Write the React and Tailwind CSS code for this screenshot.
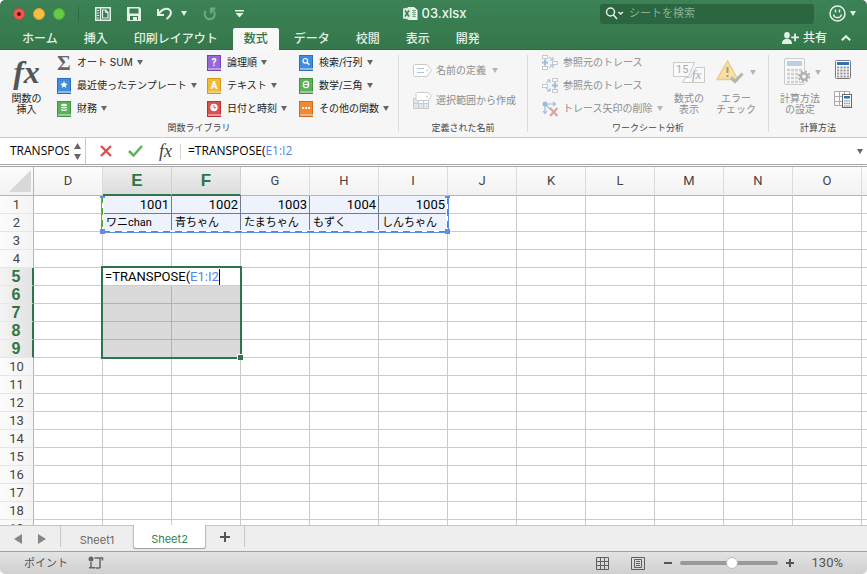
import { useState } from "react";
import clsx from "clsx";

const UI = "font-['Inter','Noto_Sans_CJK_JP',sans-serif]";
const CELL = "font-['Roboto','Noto_Sans_CJK_JP',sans-serif]";
const CODE = "font-['Open_Sans','Noto_Sans_CJK_JP',sans-serif]";

const TABS = ["ホーム", "挿入", "印刷レイアウト", "数式", "データ", "校閲", "表示", "開発"];
const COLUMNS = ["D", "E", "F", "G", "H", "I", "J", "K", "L", "M", "N", "O"];
const ROWS = Array.from({ length: 19 }, (_, i) => i + 1);

const DATA = {
    1: { E: "1001", F: "1002", G: "1003", H: "1004", I: "1005" },
    2: { E: "ワニchan", F: "青ちゃん", G: "たまちゃん", H: "もずく", I: "しんちゃん" },
};

const COL_W = 69;
const ROW_H = 18;
const HEAD_W = 34;
const HEAD_H = 29;

// box of a cell range in grid coordinates, starting on the gridline before it
const rangeBox = (col, row, cols, rows) => ({
    left: HEAD_W + COL_W * col - 1,
    top: HEAD_H + ROW_H * row - 1,
    width: COL_W * cols,
    height: ROW_H * rows,
});

const Caret = ({ className = "text-[#666]" }) => (
    <svg width="6" height="5" viewBox="0 0 6 5" className={clsx("shrink-0", className)} aria-hidden="true">
        <path d="M0 0h6L3 5z" fill="currentColor" />
    </svg>
);

const TitleBar = () => (
    <div className="flex h-[27px] items-center">
        <div className="flex flex-1 items-center pl-[13px]">
            <div className="flex gap-2">
                <button aria-label="閉じる" className="flex size-3 items-center justify-center rounded-full border border-[#c9473f] bg-[#f25a52]">
                    <span className="size-1 rounded-full bg-[#5a0d08]" />
                </button>
                <button aria-label="しまう" className="size-3 rounded-full border border-[#d9a032] bg-[#f8bc3f]" />
                <button aria-label="拡大" className="size-3 rounded-full border border-[#4fae35] bg-[#63cb45]" />
            </div>
            <span className="ml-[13px] h-4 w-px bg-[#2f6d45]" />
            <button aria-label="ギャラリー" className="ml-4">
                <svg width="16" height="14" viewBox="0 0 16 14" fill="none" stroke="#e4f1e8">
                    <path d="M.75.75h14.5v12.500H.75z" strokeWidth="1.500" />
                    <path d="M5.500 1v12" strokeWidth="1.200" />
                    <path d="M2 3.500h2M2 6h2M2 8.500h2M2 11h2" />
                    <path d="M7.500 3h3.200l2.300 2.300V11H7.500z" strokeWidth="1.200" />
                    <path d="M10.500 3v2.500H13" />
                </svg>
            </button>
            <button aria-label="保存" className="ml-4">
                <svg width="14" height="14" viewBox="0 0 14 14">
                    <path d="M0 0h12.500L14 1.500V14H0z" fill="#e4f1e8" />
                    <path d="M2.500 1.500h9v5h-9zM3 9h8v4H3z" fill="#397f52" />
                    <path d="M6 10h4v3H6z" fill="#e4f1e8" />
                </svg>
            </button>
            <button aria-label="元に戻す" className="ml-4 flex items-center gap-2">
                <svg width="16" height="13" viewBox="0 0 16 13" fill="none" stroke="#e4f1e8" strokeWidth="2">
                    <path d="M1.500 7.500C5 1 11 .5 13.200 3.500c2 3 .2 5.500-3.700 8.500" />
                    <path d="M1 2v6h6" />
                </svg>
                <Caret className="text-[#e4f1e8]" />
            </button>
            <button aria-label="やり直す" className="ml-4" disabled>
                <svg width="13" height="14" viewBox="0 0 13 14" fill="none" stroke="#6fa783" strokeWidth="2">
                    <path d="M2.800 4a5 5 0 1 0 5.700-1.500" />
                    <path d="M12.500 1.500H8V6.500" />
                </svg>
            </button>
            <button aria-label="ツールバーのカスタマイズ" className="ml-[19px]">
                <svg width="9" height="8" viewBox="0 0 9 8" fill="#e4f1e8">
                    <path d="M0 0h9v1.500H0zM.5 3h8l-4 4.500z" />
                </svg>
            </button>
        </div>
        <div className="flex items-center gap-1 text-[13px] font-medium text-[#eef6f0]">
            <svg width="15" height="15" viewBox="0 0 15 15">
                <path d="M5 1h6l3.500 3v10H5z" fill="#f3f8f4" />
                <path d="M9 4.500h4M9 6.500h4M9 8.500h4M9 10.500h4M11 3.500v8" stroke="#7fae8f" />
                <path d="M0 2.500 8 1v13l-8-1.500z" fill="#d8e8dd" />
                <path d="m2 4.500 4 6M6 4.500l-4 6" stroke="#397f52" strokeWidth="1.500" />
            </svg>
            <h1>03.xlsx</h1>
        </div>
        <div className="flex flex-1 items-center justify-end pr-[11px]">
            <label className="flex h-5 w-[214px] items-center rounded-[3px] bg-[#2b6641] pl-[5px]">
                <svg width="20" height="13" viewBox="0 0 20 13" fill="none" stroke="#e4f1e8" strokeWidth="1.500" className="shrink-0">
                    <circle cx="5.500" cy="5" r="4" />
                    <path d="m8.500 8 3.500 4M13.500 5l2.200 2 2.200-2" />
                </svg>
                <input
                    type="search"
                    aria-label="シートを検索"
                    placeholder="シートを検索"
                    className="ml-1 w-full min-w-0 bg-transparent text-[11px] outline-none placeholder:text-[#86b395]"
                />
            </label>
            <button aria-label="フィードバック" className="ml-[15px] flex items-center gap-1">
                <svg width="17" height="17" viewBox="0 0 17 17" fill="none" stroke="#e4f1e8" strokeWidth="1.500">
                    <circle cx="8.500" cy="8.500" r="7.500" />
                    <path d="M4.500 9.500c.7 4.200 7.300 4.200 8 0M6.500 4.500v3M10.500 4.500v3" />
                </svg>
                <Caret className="text-[#e4f1e8]" />
            </button>
        </div>
    </div>
);

const RibbonTabs = ({ active, onSelect }) => (
    <div className="flex h-[23px] items-end justify-between border-b border-[#2d6b42] pr-3">
        <nav className="flex gap-1 pl-[11px]">
            {TABS.map((tab) => (
                <button
                    key={tab}
                    onClick={() => onSelect(tab)}
                    className={clsx(
                        "-mb-px h-[22px] rounded-t-[2px] px-[11px] text-xs font-medium whitespace-nowrap",
                        tab === active ? "bg-[#f8f8f8] text-[#2f7549]" : "text-[#e4f1e8]"
                    )}
                >
                    {tab}
                </button>
            ))}
        </nav>
        <div className="flex h-full items-center gap-[10px] text-xs font-medium text-[#eef6f0]">
            <button className="flex items-center gap-1">
                <svg width="17" height="12" viewBox="0 0 17 12" fill="#e4f1e8">
                    <ellipse cx="5" cy="3.200" rx="2.800" ry="3.200" />
                    <path d="M0 12c0-3.500 1.500-4.500 3.500-5h3c2 .5 3.500 1.500 3.500 5zM12.200 1.500h1.800v3h3v1.800h-3v3h-1.800v-3h-3V4.500h3z" />
                </svg>
                共有
            </button>
            <button aria-label="リボンを折りたたむ" className="px-1">
                <svg width="10" height="6" viewBox="0 0 10 6" fill="none" stroke="#eef6f0" strokeWidth="2">
                    <path d="m.8 5.200 4.200-4 4.200 4" />
                </svg>
            </button>
        </div>
    </div>
);

const BOOK_COLORS = {
    blue: ["#3d8ee0", "#2a70bd"],
    green: ["#5cb25a", "#3f9440"],
    purple: ["#9568d8", "#7346b8"],
    yellow: ["#f2bd35", "#d49a17"],
    red: ["#dd5050", "#bd3030"],
    orange: ["#ef8b35", "#cf6c18"],
};

const Book = ({ color, children }) => (
    <svg width="14" height="16" viewBox="0 0 14 16" className="shrink-0" aria-hidden="true">
        <path d="M0 0h14v16H0z" fill={BOOK_COLORS[color][1]} />
        <path d="M1 1h12v12H1z" fill={BOOK_COLORS[color][0]} />
        <path d="M1 13.500h13v1H1z" fill="#fff" />
        {children}
    </svg>
);

const bookText = {
    x: 7,
    y: 10.5,
    textAnchor: "middle",
    fill: "#fff",
    fontSize: 10,
    fontWeight: 700,
    fontFamily: "Roboto, sans-serif",
};

const LIBRARY = [
    {
        width: "w-[150px]",
        items: [
            {
                label: "オート SUM",
                icon: <span className="w-[14px] font-['Liberation_Serif',serif] text-[21px] leading-4 font-bold text-[#666]">Σ</span>,
            },
            {
                label: "最近使ったテンプレート",
                icon: (
                    <Book color="blue">
                        <path d="m7 3 1.100 2.500 2.700.2-2.100 1.700.7 2.600L7 8.600 4.600 10l.7-2.600-2.100-1.700 2.700-.2z" fill="#fff" />
                    </Book>
                ),
            },
            {
                label: "財務",
                icon: (
                    <Book color="green">
                        <ellipse cx="7" cy="4" rx="3" ry="1.200" fill="#fff" />
                        <path d="M4 5.500q3 1.500 6 0v1.200q-3 1.500-6 0zM4 8q3 1.500 6 0v1.300q-3 1.500-6 0z" fill="#fff" />
                    </Book>
                ),
            },
        ],
    },
    {
        width: "w-[92px]",
        items: [
            { label: "論理順", icon: <Book color="purple"><text {...bookText}>?</text></Book> },
            { label: "テキスト", icon: <Book color="yellow"><text {...bookText}>A</text></Book> },
            {
                label: "日付と時刻",
                icon: (
                    <Book color="red">
                        <circle cx="7" cy="6.500" r="3.700" fill="#fff" />
                        <path d="M7 4v2.800h2.200" fill="none" stroke="#dd5050" />
                    </Book>
                ),
            },
        ],
    },
    {
        width: "w-[98px]",
        items: [
            {
                label: "検索/行列",
                icon: (
                    <Book color="blue">
                        <circle cx="6.300" cy="5.800" r="2.300" fill="none" stroke="#fff" strokeWidth="1.200" />
                        <path d="m8 7.500 2.300 2.300" stroke="#fff" strokeWidth="1.400" />
                    </Book>
                ),
            },
            {
                label: "数学/三角",
                icon: (
                    <Book color="green">
                        <ellipse cx="7" cy="6.500" rx="2.700" ry="3.200" fill="none" stroke="#fff" strokeWidth="1.200" />
                        <path d="M4.500 6.500h5" stroke="#fff" />
                    </Book>
                ),
            },
            {
                label: "その他の関数",
                icon: (
                    <Book color="orange">
                        <path d="M3 6h2v2H3zM6 6h2v2H6zM9 6h2v2H9z" fill="#fff" />
                    </Book>
                ),
            },
        ],
    },
];

const TRACE = [
    {
        label: "参照元のトレース",
        icon: (
            <>
                <path d="M.5.5h5v3h-5zM.5 11.500h5v3h-5zM10.500 6.500h5v3h-5z" fill="#fff" stroke="#c4c4c4" />
                <path d="M0 7.500h6M3 4.500v6" stroke="#9dbdda" strokeWidth="2" />
                <path d="m7 2 4 3m0-3v3H8M7 13l4-3m0 3v-3H8" fill="none" stroke="#9dbdda" />
            </>
        ),
    },
    {
        label: "参照先のトレース",
        icon: (
            <>
                <path d="M10.500.5h5v3h-5zM10.500 11.500h5v3h-5zM.5 6.500h5v3h-5z" fill="#fff" stroke="#c4c4c4" />
                <path d="M10 7.500h6M13 4.500v6" stroke="#9dbdda" strokeWidth="2" />
                <path d="m4 5 4-3M5 2h3v3M4 10l4 3m-3 0h3v-3" fill="none" stroke="#9dbdda" />
            </>
        ),
    },
    {
        label: "トレース矢印の削除",
        menu: true,
        icon: (
            <>
                <circle cx="3" cy="3" r="2.500" fill="#9dbdda" />
                <path d="M3 3h10M11 1l2.500 2L11 5M3 3v9M1 10l2 2.500L5 10M4 4l4 4" fill="none" stroke="#9dbdda" strokeWidth="1.200" />
                <path d="m8 7 7.500 8M15.500 7 8 15" stroke="#dfa0a0" strokeWidth="2.200" />
            </>
        ),
    },
];

const Group = ({ label, className, children }) => (
    <section className={clsx("flex shrink-0 flex-col pt-px", className)}>
        <div className="flex h-[69px]">{children}</div>
        <h2 className="text-center text-[9px] leading-[15px] text-[#444]">{label}</h2>
    </section>
);

const Divider = () => <span className="my-[5px] w-px shrink-0 bg-[#dcdcdc]" />;

const Ribbon = () => (
    <div className="flex h-[87px] overflow-hidden bg-[#f6f6f6] text-[10px] leading-[11px] whitespace-nowrap text-[#222]">
        <Group label="関数ライブラリ" className="w-[398px]">
            <button className="flex w-[57px] flex-col items-center pr-1">
                <span className="h-[42px] font-['Liberation_Serif',serif] text-[32px] leading-[42px] font-bold text-[#555] italic">fx</span>
                <span>関数の<br />挿入</span>
            </button>
            {LIBRARY.map((column, i) => (
                <div key={i} className={clsx("flex flex-col", column.width)}>
                    {column.items.map((item) => (
                        <button key={item.label} className="flex h-[23px] items-center text-left">
                            {item.icon}
                            <span className="mr-1 ml-[6px]">{item.label}</span>
                            <Caret />
                        </button>
                    ))}
                </div>
            ))}
        </Group>
        <Divider />
        <Group label="定義された名前" className="w-[128px]">
            <div className="flex flex-col gap-2 pt-2 pl-[14px] text-[#8d8d8d]">
                <button className="flex h-[22px] items-center" disabled>
                    <svg width="19" height="13" viewBox="0 0 19 13" fill="#fff" stroke="#cacaca">
                        <path d="M1.500.5H14l4.500 6-4.500 6H1.500l-1-1v-10z" />
                        <path d="M4 4.500h7M4 8.500h7" stroke="#a9c5df" />
                        <circle cx="14" cy="6.500" r=".6" />
                    </svg>
                    <span className="mr-[6px] ml-1">名前の定義</span>
                    <Caret className="text-[#b5b5b5]" />
                </button>
                <button className="flex h-[22px] items-center" disabled>
                    <svg width="19" height="17" viewBox="0 0 19 17" fill="#fff" stroke="#cacaca">
                        <path d="M.5 6.500h15v10H.5z" />
                        <path d="M1 7h5v4.500H1zM1 12h14v4H1z" fill="#dbe8f2" stroke="none" />
                        <path d="M.5 11.500h15M5.500 6.500v10M10.500 6.500v10" />
                        <path d="M4 .5h11L18.500 4 15 8.500H4L3 7.500v-6z" />
                        <circle cx="14" cy="4.500" r=".6" />
                    </svg>
                    <span className="ml-1">選択範囲から作成</span>
                </button>
            </div>
        </Group>
        <Divider />
        <Group label="ワークシート分析" className="w-[240px]">
            <div className="flex w-[139px] flex-col pl-[14px] text-[#8d8d8d]">
                {TRACE.map((item) => (
                    <button key={item.label} className="flex h-[23px] items-center" disabled>
                        <svg width="16" height="16" viewBox="0 0 16 16" className="shrink-0">{item.icon}</svg>
                        <span className="mr-1 ml-[5px]">{item.label}</span>
                        {item.menu && <Caret className="text-[#b5b5b5]" />}
                    </button>
                ))}
            </div>
            <button className="flex w-11 flex-col items-center text-[#8d8d8d]" disabled>
                <span className="flex h-[42px] items-center">
                    <svg width="32" height="24" viewBox="0 0 32 24" fill="#fafafa" stroke="#cacaca">
                        <path d="M.5 2.500h21l-6 14H.5zM23 7.500h8.500v15H9.500l3-5h5z" />
                        <text x="3" y="13" fill="#aaa" stroke="none" fontSize="11" fontFamily="Roboto, sans-serif">15</text>
                        <text x="19" y="19" fill="#aaa" stroke="none" fontSize="13" fontStyle="italic" fontFamily="Liberation Serif, serif">fx</text>
                    </svg>
                </span>
                <span>数式の<br />表示</span>
            </button>
            <button className="flex w-[50px] flex-col items-center text-[#8d8d8d]" disabled>
                <span className="flex h-[42px] items-center gap-[6px]">
                    <svg width="28" height="24" viewBox="0 0 28 24">
                        <path d="M11.500 1 22 19.500H1z" fill="#f8dfa3" stroke="#ebcb86" strokeLinejoin="round" strokeWidth="1.500" />
                        <path d="M11.500 7v6M11.500 15v2" stroke="#a99872" strokeWidth="2" />
                        <path d="m15 17.500 4 4 7.500-8" fill="none" stroke="#b5b5b5" strokeWidth="3.200" />
                    </svg>
                    <Caret className="text-[#b5b5b5]" />
                </span>
                <span>エラー<br />チェック</span>
            </button>
        </Group>
        <Divider />
        <Group label="計算方法" className="min-w-[98px] flex-1">
            <button className="flex w-[62px] flex-col items-center text-[#8d8d8d]" disabled>
                <span className="flex h-[42px] items-center gap-1 pl-1">
                    <svg width="27" height="28" viewBox="0 0 27 28">
                        <rect x=".5" y=".5" width="20" height="26" rx="1.500" fill="#fafafa" stroke="#cacaca" />
                        <path d="M3 3h15v5H3z" fill="#b6d0e9" />
                        <path d="M3 12h15M3 16h15M3 20h15M3 24h15" stroke="#cfcfcf" strokeWidth="2.500" strokeDasharray="3 1" />
                        <circle cx="20" cy="18.500" r="6.500" fill="#f6f6f6" />
                        <circle cx="20" cy="18.500" r="3.200" fill="none" stroke="#b2b2b2" strokeWidth="2.500" />
                        <circle cx="20" cy="18.500" r="5.200" fill="none" stroke="#b2b2b2" strokeWidth="2" strokeDasharray="2.050 2.034" />
                    </svg>
                    <Caret className="text-[#b5b5b5]" />
                </span>
                <span>計算方法<br />の設定</span>
            </button>
            <div className="flex flex-col items-center gap-3 pt-[9px] pl-[3px]">
                <button aria-label="再計算実行">
                    <svg width="16" height="19" viewBox="0 0 16 19">
                        <rect x=".5" y=".5" width="15" height="18" rx="1" fill="#fff" stroke="#777" />
                        <path d="M2 2h12v3H2z" fill="#2f70b5" />
                        <path d="M2 7.500h12M2 10.500h12M2 13.500h12M2 16.500h12" stroke="#999" strokeWidth="2" strokeDasharray="2.250 1" />
                    </svg>
                </button>
                <button aria-label="シート再計算">
                    <svg width="18" height="17" viewBox="0 0 18 17">
                        <path d="M.5.500h15v14H.5zM.5 5.500h15M.5 10.500h15M5.500.5v14M10.500.5v14" fill="#fff" stroke="#aaa" />
                        <rect x="8.500" y="3.500" width="9" height="13" fill="#fff" stroke="#666" />
                        <path d="M10 5h6v2.500h-6z" fill="#2f70b5" />
                        <path d="M10 10h6M10 12.500h6M10 15h6" stroke="#999" strokeWidth="1.300" strokeDasharray="1.500 .7" />
                    </svg>
                </button>
            </div>
        </Group>
    </div>
);

const FormulaText = () => (
    <>
        =TRANSPOSE(<span className="text-[#5585ec]">E1:I2</span>
    </>
);

const FormulaBar = () => (
    <div className={clsx("mb-px flex h-[28px] items-center border-t border-b border-t-[#c8c8c8] border-b-[#a6a6a6] bg-white text-xs text-black", CODE)}>
        <input aria-label="名前ボックス" defaultValue="TRANSPOSE" className="w-[69px] pl-[10px] outline-none" />
        <div className="flex w-4 flex-col items-center gap-[5px]">
            <svg width="7" height="6" viewBox="0 0 7 6" fill="#666"><path d="M3.500 0 7 6H0z" /></svg>
            <svg width="7" height="6" viewBox="0 0 7 6" fill="#666"><path d="M3.500 6 7 0H0z" /></svg>
        </div>
        <span className="h-full w-px bg-[#c8c8c8]" />
        <button aria-label="キャンセル" className="ml-[14px]">
            <svg width="12" height="12" viewBox="0 0 12 12" stroke="#df4f4b" strokeWidth="2.400"><path d="m1 1 10 10M11 1 1 11" /></svg>
        </button>
        <button aria-label="入力" className="ml-4">
            <svg width="15" height="12" viewBox="0 0 15 12" fill="none" stroke="#5cb552" strokeWidth="2.500"><path d="m1 6 4.500 4.500L14 1" /></svg>
        </button>
        <button aria-label="数式パレット" className="ml-4 font-['Liberation_Serif',serif] text-lg leading-5 text-[#444] italic">fx</button>
        <span className="ml-2 h-[15px] w-px bg-[#d5d5d5]" />
        <div className="ml-[7px] flex-1"><FormulaText /></div>
        <button aria-label="数式バーを展開" className="pr-1"><Caret /></button>
    </div>
);

const inSource = (col, row) => row <= 2 && "EFGHI".includes(col);
const inTarget = (col, row) => row >= 5 && row <= 9 && "EF".includes(col);

const Cell = ({ col, row }) => {
    const value = DATA[row]?.[col];
    return (
        <td
            className={clsx(
                "h-[18px] overflow-hidden border-r border-b p-0 leading-[17px] whitespace-nowrap",
                inSource(col, row)
                    ? "border-[#747c8c] bg-[#edf2fd]"
                    : inTarget(col, row) && row > 5
                      ? "border-[#b2b2b2] bg-[#dadada]"
                      : "border-[#cbcbcb]",
                row === 1 ? "pr-[2px] text-right" : "pl-[3px] text-[11px]"
            )}
        >
            {value}
        </td>
    );
};

const SourceOutline = () => {
    const box = rangeBox(1, 0, 5, 2);
    const { width: w, height: h } = box;
    const inner = `M.5 1V${h + 0.5}H${w + 0.5}V1`;
    return (
        <svg className="pointer-events-none absolute overflow-visible" style={box} shapeRendering="crispEdges" aria-hidden="true">
            <path d={inner} fill="none" stroke="#fff" strokeWidth="3" />
            <path d={`M-.5 1V${h + 1.5}H${w + 1.5}V1`} fill="none" stroke="#5f8ee8" />
            <path d={inner} fill="none" stroke="#4ea72e" strokeDasharray="7 5" />
            <path d={`M-2 1h5v2h-5zM${w - 2} 1h5v2h-5zM-2 ${h - 2}h5v5h-5zM${w - 2} ${h - 2}h5v5h-5z`} fill="#5f8ee8" />
        </svg>
    );
};

const TargetOutline = () => {
    const box = rangeBox(1, 4, 2, 5);
    return (
        <div className="pointer-events-none absolute" style={box}>
            <div className="absolute -inset-px -right-[2px] -bottom-[2px] border-2 border-[#2f7549]" />
            <div className="absolute -right-[3px] -bottom-[3px] size-[6px] border-t border-l border-white bg-[#2f7549]" />
            <div className="absolute top-px left-px flex h-[17px] items-center bg-white pl-[2px] text-black">
                <FormulaText />
                <span className="h-4 w-px bg-black" />
            </div>
        </div>
    );
};

const Grid = () => (
    <div className={clsx("relative min-h-0 flex-1 overflow-hidden border-t border-[#a6a6a6] bg-white text-[13px] text-black", CELL)}>
        <table className="w-full table-fixed border-separate border-spacing-0">
            <colgroup>
                <col className="w-[34px]" />
                {COLUMNS.map((c) => <col key={c} className="w-[69px]" />)}
                <col />
            </colgroup>
            <thead>
                <tr className="bg-linear-to-b from-[#fcfcfc] to-[#f2f2f2]">
                    <td className="h-[29px] border-r border-b border-[#b5b5b5] p-0">
                        <svg width="22" height="22" viewBox="0 0 22 22" className="ml-[9px]"><path d="M22 0v22H0z" fill="#d8d8d8" /></svg>
                    </td>
                    {COLUMNS.map((c) => (
                        <th
                            key={c}
                            scope="col"
                            className={clsx(
                                "h-[29px] p-0",
                                "EF".includes(c)
                                    ? "border-r border-b-2 border-r-[#d0d0d0] border-b-[#2f7549] bg-linear-to-b from-[#f0f0f0] to-[#dcdcdc] font-['Liberation_Sans',sans-serif] text-[17px] leading-5 font-bold text-[#2f7549]"
                                    : "border-r border-b border-r-[#dcdcdc] border-b-[#b5b5b5] font-normal text-[#444]"
                            )}
                        >
                            {c}
                        </th>
                    ))}
                    <td className="border-b border-[#b5b5b5]" />
                </tr>
            </thead>
            <tbody>
                {ROWS.map((row) => (
                    <tr key={row}>
                        <th
                            scope="row"
                            className={clsx(
                                "h-[18px] border-b border-b-[#e6e6e6] p-0 leading-[17px]",
                                row >= 5 && row <= 9
                                    ? "border-r-2 border-r-[#2f7549] bg-linear-to-r from-[#f4f4f4] to-[#e2e2e2] font-['Liberation_Sans',sans-serif] text-base leading-[17px] font-bold text-[#2f7549]"
                                    : "border-r border-r-[#b5b5b5] bg-linear-to-r from-[#fcfcfc] to-[#f4f4f4] font-normal text-[#444]"
                            )}
                        >
                            {row}
                        </th>
                        {COLUMNS.map((c) => <Cell key={c} col={c} row={row} />)}
                        <td className="border-b border-[#cbcbcb]" />
                    </tr>
                ))}
            </tbody>
        </table>
        <SourceOutline />
        <TargetOutline />
    </div>
);

const SheetTabs = ({ active, onSelect }) => (
    <div className="flex h-[26px] shrink-0 border-t border-[#c5c5c5] bg-[#eeeeee] text-[11px] text-[#666]">
        <div className="flex w-[60px] items-center gap-4 pl-[14px]">
            <button aria-label="前のシート">
                <svg width="8" height="10" viewBox="0 0 8 10" fill="#858585"><path d="M8 0v10L0 5z" /></svg>
            </button>
            <button aria-label="次のシート">
                <svg width="8" height="10" viewBox="0 0 8 10" fill="#858585"><path d="M0 0v10l8-5z" /></svg>
            </button>
        </div>
        {["Sheet1", "Sheet2"].map((name) => (
            <button
                key={name}
                onClick={() => onSelect(name)}
                className={clsx(
                    "w-[73px] border-l pt-[6px]",
                    name === active
                        ? "-mt-px mb-[3px] rounded-b-[3px] border-r border-[#c0c0c0] bg-white text-[#2f8550] shadow-[0_1px_1px_#999]"
                        : "mb-1 border-[#c8c8c8]"
                )}
            >
                {name}
            </button>
        ))}
        <button aria-label="シートを追加" className="mb-1 flex w-[39px] items-center justify-center border-r border-[#c8c8c8]">
            <svg width="10" height="10" viewBox="0 0 10 10" stroke="#555" strokeWidth="2"><path d="M0 5h10M5 0v10" /></svg>
        </button>
    </div>
);

const StatusBar = ({ zoom, setZoom }) => (
    <footer className="flex h-[23px] shrink-0 items-center border-t border-[#a0a0a0] bg-linear-to-b from-[#e3e3e3] to-[#d0d0d0] pl-6 text-[11px] text-[#555]">
        <span>ポイント</span>
        <button aria-label="マクロの記録" className="ml-5">
            <svg width="16" height="14" viewBox="0 0 16 14" fill="none" stroke="#666" strokeWidth="1.500">
                <circle cx="3" cy="3" r="2.500" fill="#666" stroke="none" />
                <path d="M6.500 2h8v2.500M12 2v10M1 11.800h6.500M8 12h4M3 6v5" />
            </svg>
        </button>
        <div className="ml-auto flex items-center pr-6">
            <button aria-label="標準表示">
                <svg width="13" height="13" viewBox="0 0 13 13" fill="none" stroke="#606060"><path d="M.5.5h12v12H.5zM.5 4.500h12M.5 8.500h12M4.500.5v12M8.500.5v12" /></svg>
            </button>
            <button aria-label="ページ レイアウト表示" className="ml-[22px]">
                <svg width="14" height="13" viewBox="0 0 14 13" fill="none" stroke="#606060">
                    <path d="M.5.5h13v12H.5zM3.500 2.500h7v8h-7zM5 4.500h4M5 6.500h4M5 8.500h4" />
                </svg>
            </button>
            <button aria-label="縮小" className="ml-[19px]">
                <svg width="8" height="8" viewBox="0 0 8 8" stroke="#555" strokeWidth="2"><path d="M0 4h8" /></svg>
            </button>
            <input
                type="range"
                aria-label="ズーム"
                min="10"
                max="230"
                value={zoom}
                onChange={(e) => setZoom(Number(e.target.value))}
                className="mx-2 h-1 w-[98px] appearance-none rounded-full bg-[#999] [&::-webkit-slider-thumb]:size-3 [&::-webkit-slider-thumb]:appearance-none [&::-webkit-slider-thumb]:rounded-full [&::-webkit-slider-thumb]:border [&::-webkit-slider-thumb]:border-[#bbb] [&::-webkit-slider-thumb]:bg-white"
            />
            <button aria-label="拡大">
                <svg width="8" height="8" viewBox="0 0 8 8" stroke="#555" strokeWidth="2"><path d="M0 4h8M4 0v8" /></svg>
            </button>
            <output className="ml-[18px] font-['Roboto',sans-serif] text-[13px]">{zoom}%</output>
        </div>
    </footer>
);

const App = () => {
    const [tab, setTab] = useState("数式");
    const [sheet, setSheet] = useState("Sheet2");
    const [zoom, setZoom] = useState(130);

    return (
        <div className={clsx("flex h-screen flex-col overflow-hidden rounded-[5px] bg-white", UI)}>
            <header className="bg-linear-to-b from-[#3c8256] to-[#34774a]">
                <TitleBar />
                <RibbonTabs active={tab} onSelect={setTab} />
            </header>
            <Ribbon />
            <FormulaBar />
            <Grid />
            <SheetTabs active={sheet} onSelect={setSheet} />
            <StatusBar zoom={zoom} setZoom={setZoom} />
        </div>
    );
};

export default App;
